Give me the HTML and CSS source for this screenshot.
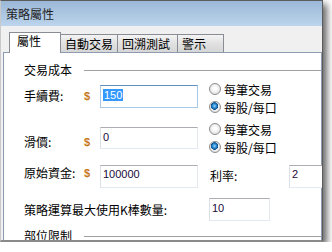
FILE: index.html
```html
<!DOCTYPE html>
<html lang="zh-Hant">
<head>
    <meta charset="UTF-8">
    <title>策略屬性</title>
    <link rel="stylesheet" href="styles.css">
</head>
<body>
    <div class="window">
        <div class="titlebar">策略屬性</div>
        <div class="window-body">
            <div class="tabs">
                <div class="tab active">屬性</div>
                <div class="tab">自動交易</div>
                <div class="tab">回溯測試</div>
                <div class="tab">警示</div>
            </div>
            <div class="panel">
                <div class="group-title"><span>交易成本</span><i class="rule"></i></div>

                <div class="row row-fee">
                    <label class="field-label">手續費:</label>
                    <span class="dollar">$</span>
                    <div class="textbox focused"><span class="selected">150</span></div>
                    <div class="radio-stack">
                        <div class="radio-line"><span class="radio"></span>每筆交易</div>
                        <div class="radio-line"><span class="radio checked"></span>每股/每口</div>
                    </div>
                </div>

                <div class="row row-slip">
                    <label class="field-label">滑價:</label>
                    <span class="dollar">$</span>
                    <div class="textbox">0</div>
                    <div class="radio-stack">
                        <div class="radio-line"><span class="radio"></span>每筆交易</div>
                        <div class="radio-line"><span class="radio checked"></span>每股/每口</div>
                    </div>
                </div>

                <div class="row row-capital">
                    <label class="field-label">原始資金:</label>
                    <span class="dollar">$</span>
                    <div class="textbox">100000</div>
                    <label class="rate-label">利率:</label>
                    <div class="textbox rate">2</div>
                </div>

                <div class="row row-bars">
                    <label class="long-label">策略運算最大使用K棒數量:</label>
                    <div class="textbox bars">10</div>
                </div>

                <div class="group-title group-second"><span>部位限制</span><i class="rule"></i></div>
            </div>
        </div>
    </div>
</body>
</html>
```

FILE: styles.css
```css
* {
    box-sizing: border-box;
}

body {
    margin: 0;
    background: #ffffff;
    font-family: "Noto Sans CJK TC", "Liberation Sans", sans-serif;
    font-size: 12px;
    color: #000;
}

.window {
    width: 323px;
    height: 242px;
    background: #f0f0f0;
    border: 1px solid #5c5c5c;
    border-left-color: #c9c9c9;
    border-bottom: 2px solid #8a8a8a;
    box-shadow: 4px 4px 7px rgba(0, 0, 0, 0.6);
    overflow: hidden;
}

.titlebar {
    height: 25px;
    padding: 6px 0 0 5px;
    line-height: 14px;
    background: linear-gradient(#9cb8d7, #bcd4ec);
    color: #1e1e1e;
}

.window-body {
    padding: 6px 0 0 2px;
}

/* tab strip */
.tabs {
    display: flex;
    align-items: flex-end;
    padding-left: 6px;
    height: 20px;
    position: relative;
    z-index: 1;
}

.tab {
    height: 18px;
    padding: 2px 0 0 4px;
    line-height: 14px;
    white-space: nowrap;
    border: 1px solid #898c95;
    border-bottom: none;
    border-left: none;
    background: linear-gradient(#f4f4f4, #e1e1e1 50%, #d6d6d6);
}

.tab.active {
    height: 21px;
    margin-bottom: -1px;
    padding: 1px 0 0 7px;
    width: 52px;
    border-left: 1px solid #898c95;
    background: #ffffff;
}

.tab:nth-child(2) { width: 57px; }
.tab:nth-child(3) { width: 60px; }
.tab:nth-child(4) { width: 46px; }

.panel {
    background: #ffffff;
    border: 1px solid #8e9bb0;
    height: 200px;
    padding-left: 20px;
    padding-top: 10px;
}

.group-title {
    display: flex;
    align-items: center;
    height: 14px;
    line-height: 14px;
}

.group-title span {
    width: 60px;
    flex: none;
}

.rule {
    flex: 1;
    height: 1px;
    background: #a0a0a0;
}

/* form rows */
.row {
    display: flex;
    align-items: flex-start;
    height: 36px;
}

.row-fee { margin-top: 3px; }
.row-slip { margin-top: 4px; }
.row-capital { margin-top: 4px; height: 34px; }
.row-bars { height: 32px; }

.field-label {
    width: 60px;
    flex: none;
    line-height: 14px;
}

.dollar {
    width: 16px;
    flex: none;
    font-family: "Liberation Sans", sans-serif;
    font-weight: bold;
    font-size: 11px;
    line-height: 14px;
    color: #c8781c;
}

.textbox {
    width: 98px;
    height: 23px;
    flex: none;
    padding: 2px 0 0 2px;
    font-family: "Liberation Sans", sans-serif;
    font-size: 11px;
    line-height: 14px;
    border: 1px solid #e3e9ef;
    border-top-color: #abadb3;
    border-left-color: #dbdfe6;
    background: #fff;
    color: #1a0a3a;
}

.textbox.focused {
    border-color: #a9c9e8;
    border-top-color: #5f8fbd;
}

.selected {
    background: #3399ff;
    color: #fff;
    padding: 0 1px;
}

.row-fee .field-label,
.row-fee .dollar { margin-top: 9px; }
.row-fee .textbox { margin-top: 5px; }

.row-slip .field-label,
.row-slip .dollar { margin-top: 15px; }
.row-slip .textbox { margin-top: 7px; height: 22px; }

.row-capital .field-label,
.row-capital .dollar { margin-top: 6px; }
.row-capital .textbox { margin-top: 5px; padding-top: 1px; }

.rate-label {
    margin: 9px 0 0 12px;
    width: 79px;
    flex: none;
    line-height: 14px;
}

.textbox.rate {
    width: 40px;
}

.long-label {
    width: 185px;
    flex: none;
    line-height: 14px;
    margin-top: 9px;
}

.textbox.bars {
    width: 61px;
    margin-top: 4px;
}

/* radio buttons */
.radio-stack {
    margin-left: 11px;
}

.radio-line {
    display: flex;
    align-items: center;
    height: 18px;
}

.radio {
    width: 12px;
    height: 12px;
    margin-right: 3px;
    border-radius: 50%;
    border: 1px solid #8f8f8f;
    background: radial-gradient(circle at 50% 45%, #ffffff 20%, #d9d9d9 90%);
}

.radio.checked {
    background:
        radial-gradient(circle at 45% 40%, #9ad8ff 0, #2a8ad0 2px, #0b4f8c 3.5px, transparent 4px),
        radial-gradient(circle at 50% 45%, #ffffff 20%, #d9d9d9 90%);
}

.group-second {
    margin-top: 3px;
}
```
